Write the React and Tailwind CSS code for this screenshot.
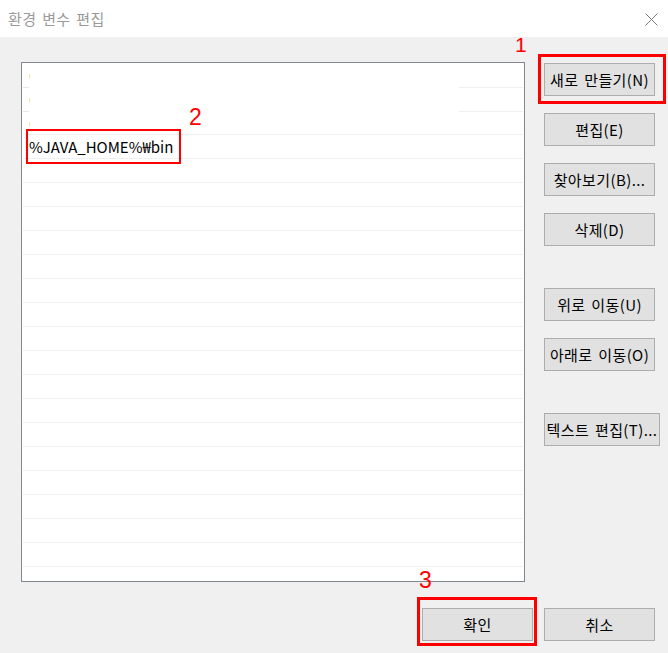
import React from 'react';

const FONT = { fontFamily: '"Noto Sans CJK KR", "Noto Sans", sans-serif' };

// rows of the path list; the first three are blanked out in the shot
const ROWS = 21;

function WinButton({ children, wide }) {
  return (
    <button
      className={`${wide ? 'w-[116px]' : 'w-[111px]'} h-[33px] bg-[#e1e1e1] border border-[#adadad] text-[15px] text-black leading-none tracking-[0.4px] [word-spacing:2px] flex items-center justify-center whitespace-nowrap`}
    >
      {children}
    </button>
  );
}

function Marked({ children, className }) {
  return (
    <div className="relative">
      {children}
      <div className={`absolute border-[3px] border-[#ff0000] pointer-events-none ${className}`} />
    </div>
  );
}

function ListRow({ i }) {
  if (i < 2) {
    return (
      <div className="h-[24px] relative">
        <div className="absolute left-[6px] top-[11px] w-px h-[5px] bg-[#fbe7a8]" />
      </div>
    );
  }
  if (i === 2) {
    return (
      <div className="h-[24px] border-b border-[#efefef] relative">
        <div className="absolute left-[6px] top-[11px] w-px h-[5px] bg-[#fbe7a8]" />
      </div>
    );
  }
  if (i === 3) {
    return (
      <div className="h-[24px] border-b border-[#efefef] relative flex items-center pl-[6px]">
        <span className="text-[15px] text-black leading-none">%JAVA_HOME%₩bin</span>
        <div className="absolute left-[3px] top-[-6px] w-[155px] h-[35px] border-2 border-[#ff0000]" />
      </div>
    );
  }
  return <div className="h-[24px] border-b border-[#efefef]" />;
}

export default function App() {
  return (
    <div className="relative w-[668px] h-[653px] bg-[#f0f0f0] flex flex-col overflow-hidden" style={FONT}>
      <div className="h-[37px] bg-white flex items-center justify-between pl-[8px] pr-[10px]">
        <span className="text-[15px] text-[#9a9a9a] leading-none tracking-[0.4px] [word-spacing:2px]">환경 변수 편집</span>
        <svg width="13" height="13" viewBox="0 0 13 13" className="mt-px">
          <path d="M0.5 0.5 L12.5 12.5 M12.5 0.5 L0.5 12.5" stroke="#7a7a7a" strokeWidth="1" fill="none" />
        </svg>
      </div>

      <div className="flex pt-[25px] pl-[21px]">
        <div className="relative w-[504px] h-[520px] border border-[#828790] bg-white overflow-hidden">
          {/* the partially hidden separator lines of the first two rows */}
          <div className="absolute left-[1px] top-[24px] w-[6px] h-px bg-[#e6e6e6]" />
          <div className="absolute left-[1px] top-[48px] w-[6px] h-px bg-[#e6e6e6]" />
          <div className="absolute left-[437px] top-[24px] w-[64px] h-px bg-[#efefef]" />
          <div className="absolute left-[437px] top-[48px] w-[64px] h-px bg-[#efefef]" />
          <div className="px-px">
            {Array.from({ length: ROWS }, (_, i) => (
              <ListRow key={i} i={i} />
            ))}
          </div>
        </div>

        <div className="ml-[19px] pt-px flex flex-col">
          <Marked className="-left-[6px] -right-[6px] -top-[9px] -bottom-[8px]">
            <WinButton>새로 만들기(N)</WinButton>
          </Marked>
          <div className="mt-[17px]"><WinButton>편집(E)</WinButton></div>
          <div className="mt-[17px]"><WinButton>찾아보기(B)...</WinButton></div>
          <div className="mt-[17px]"><WinButton>삭제(D)</WinButton></div>
          <div className="mt-[42px]"><WinButton>위로 이동(U)</WinButton></div>
          <div className="mt-[17px]"><WinButton>아래로 이동(O)</WinButton></div>
          <div className="mt-[42px]"><WinButton wide>텍스트 편집(T)...</WinButton></div>
        </div>
      </div>

      <div className="flex justify-end gap-[11px] pr-[13px] mt-[26px]">
        <Marked className="-left-[5px] -right-[4px] -top-[11px] -bottom-[5px]">
          <WinButton>확인</WinButton>
        </Marked>
        <WinButton>취소</WinButton>
      </div>

      {/* annotation numbers */}
      <span className="absolute left-[515px] top-[34px] text-[21px] leading-none text-[#ff0000]" style={{ fontFamily: '"Liberation Sans", Arial, sans-serif' }}>1</span>
      <span className="absolute left-[189px] top-[106px] text-[23px] leading-none text-[#ff0000]" style={{ fontFamily: '"Liberation Sans", Arial, sans-serif' }}>2</span>
      <span className="absolute left-[419px] top-[569px] text-[23px] leading-none text-[#ff0000]" style={{ fontFamily: '"Liberation Sans", Arial, sans-serif' }}>3</span>
    </div>
  );
}
